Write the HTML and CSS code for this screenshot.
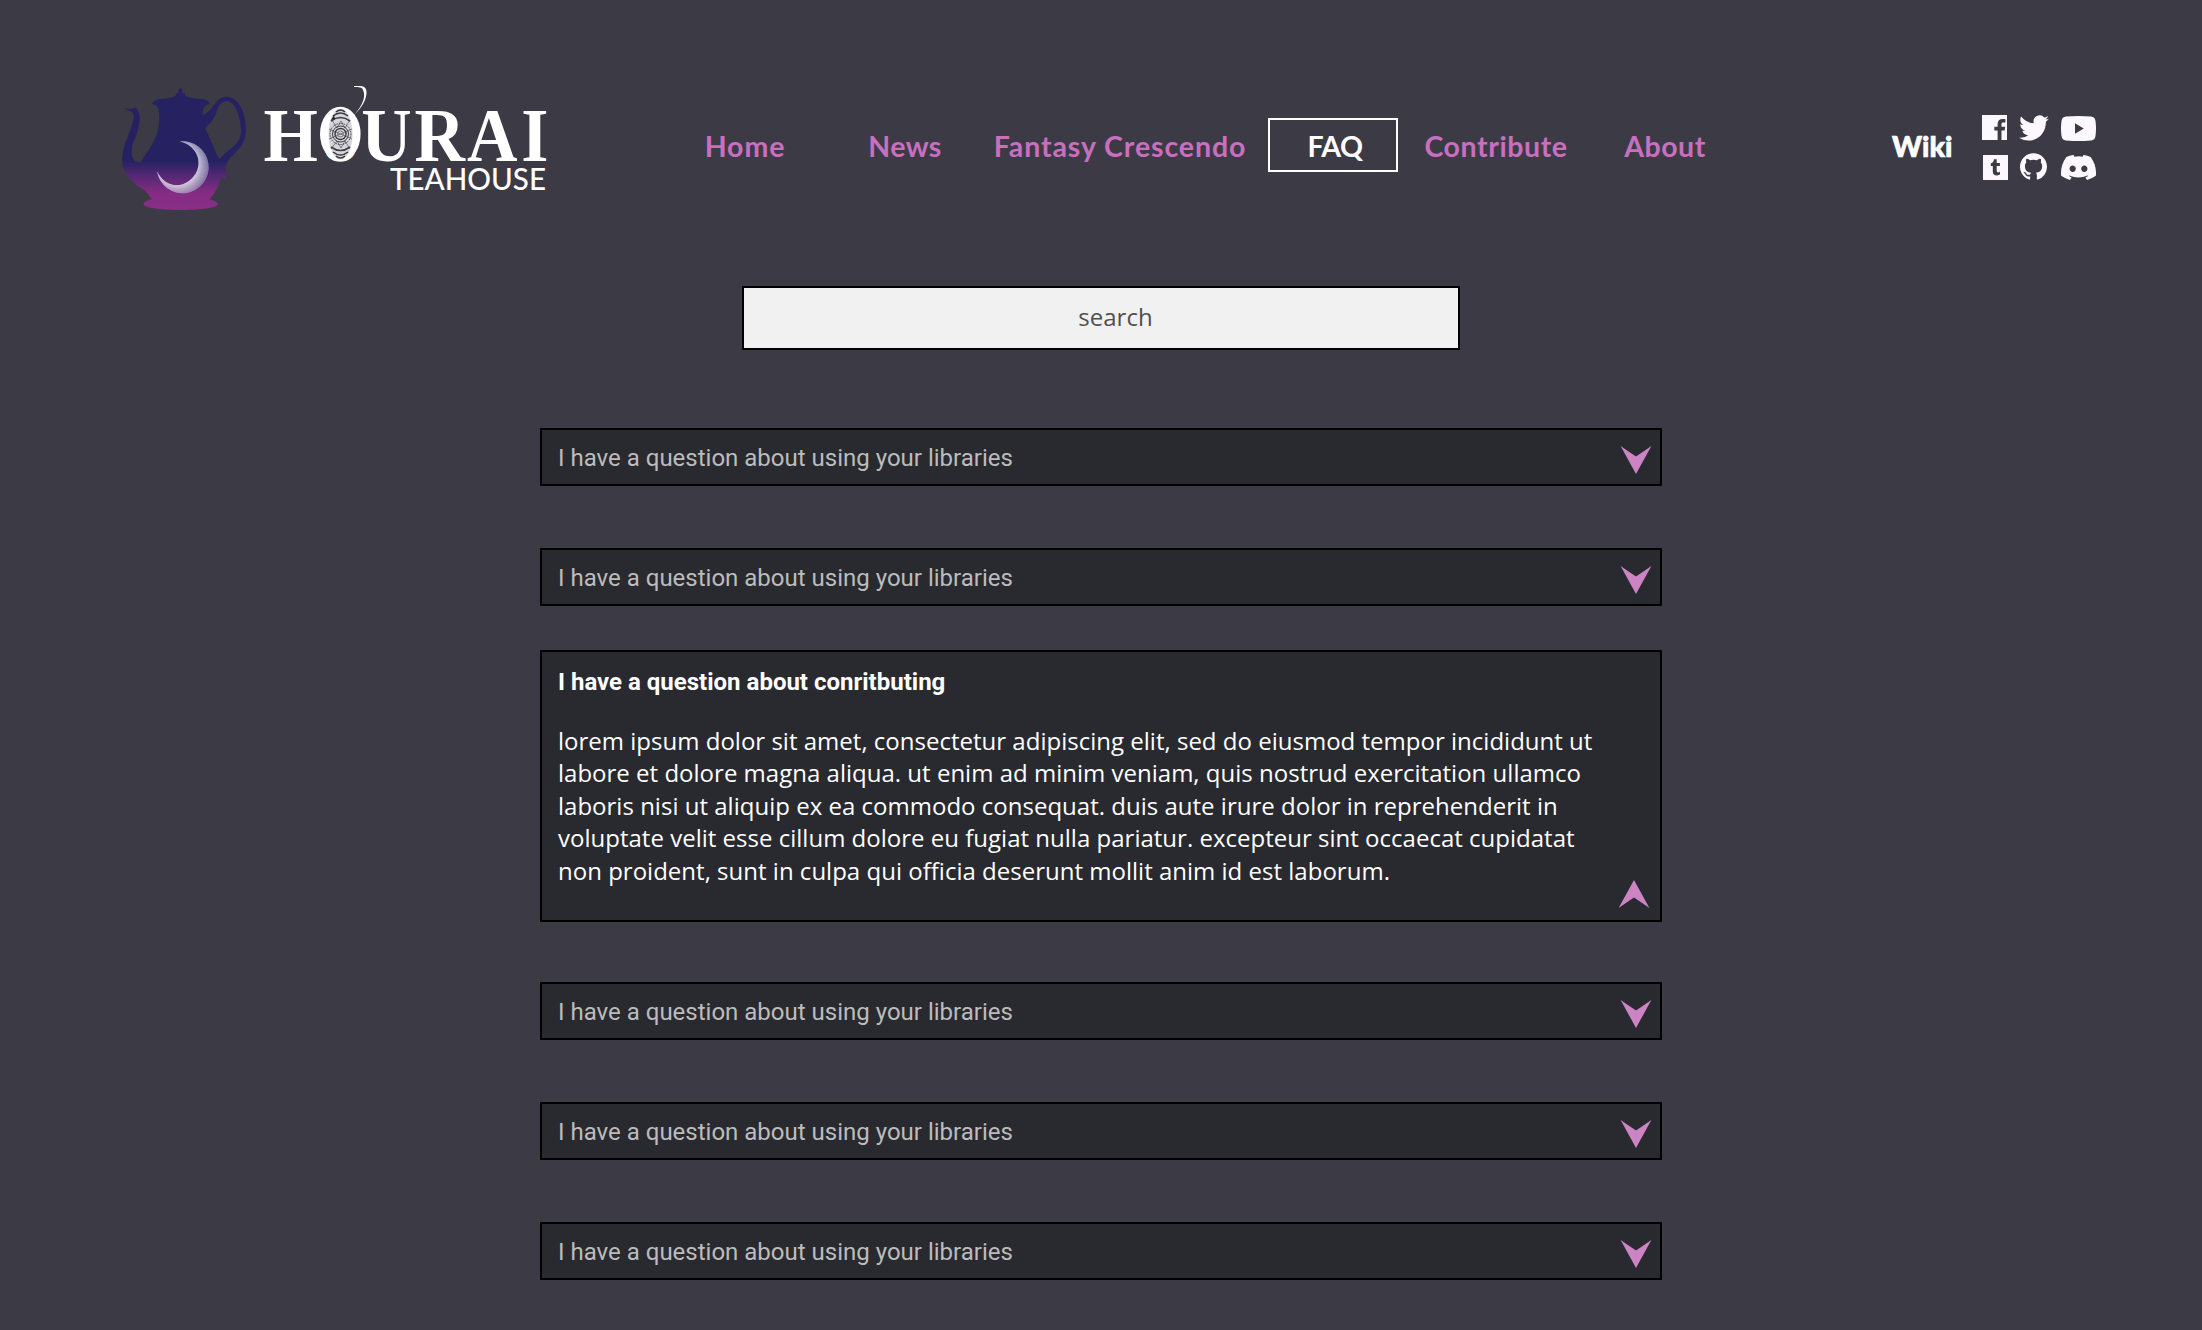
FILE: index.html
```html
<!DOCTYPE html>
<html lang="en">
<head>
<meta charset="utf-8">
<title>Hourai Teahouse - FAQ</title>
<link rel="stylesheet" href="styles.css">
</head>
<body>
<svg class="defs" width="0" height="0" aria-hidden="true">
  <symbol id="chevron" viewBox="0 0 32 28"><path d="M.6 0L16 10.500 31.400 0 16 28z"/></symbol>
</svg>
<header class="header">
  <a class="brand">
    <svg class="teapot" viewBox="0 0 450 450">
      <defs>
        <linearGradient id="night" gradientUnits="userSpaceOnUse" x1="0" y1="55" x2="0" y2="420">
          <stop offset="0" stop-color="#262262"/><stop offset=".6" stop-color="#262262"/>
          <stop offset=".72" stop-color="#552874"/><stop offset=".86" stop-color="#852c84"/><stop offset="1" stop-color="#892e86"/>
        </linearGradient>
        <linearGradient id="moonlight" gradientUnits="userSpaceOnUse" x1="190" y1="355" x2="255" y2="220">
          <stop offset="0" stop-color="#c8a9cf"/><stop offset="1" stop-color="#7f80ad"/>
        </linearGradient>
        <radialGradient id="shade" gradientUnits="userSpaceOnUse" cx="205" cy="282" r="95">
          <stop offset=".6" stop-color="#fff" stop-opacity=".55"/><stop offset="1" stop-color="#53407e" stop-opacity=".45"/>
        </radialGradient>
      </defs>
      <path fill="url(#night)" fill-rule="evenodd" d="M211 55C216 55 219 60 217 66L220 69 226 71 224 75C234 83 250 86 268 86C284 85 295 91 300 102C288 103 283 110 280 120C278 126 277 131 279 135C292 131 302 118 313 103C325 85 338 80 352 80C388 82 408 130 408 180C407 208 398 225 383 241C370 256 356 268 350 281C345 295 346 312 347 328C339 325 335 321 332 318C328 345 317 368 298 388C313 391 323 396 323 403C323 413 275 420 212 420C150 420 101 413 101 403C101 396 111 391 127 388C119 379 112 370 105 361C83 350 62 332 48 310C39 295 35 280 36 264C38 233 53 202 64 170C71 148 74 135 68 128C63 122 55 123 51 120C47 118 46 117 45 114C52 117 60 117 66 116C71 115 74 114 77 111C81 116 84 122 87 130C91 142 90 152 88 162C84 190 67 217 65 244C64 262 74 280 93 277C107 248 132 222 141 190C149 163 150 130 143 112C140 106 135 104 126 101C132 90 144 86 158 86C172 86 189 83 199 75L197 71 203 69 206 66C203 60 206 55 211 55ZM286 175C300 160 310 150 318 132C325 110 333 95 350 93C375 95 390 135 393 180C393 198 388 210 380 219C365 235 345 250 327 267Z"/>
      <path d="M209 214A78 78 0 1 1 141 304C162 348 205 356 237 333 283 301 274 230 209 214z" fill="url(#moonlight)"/>
      <path d="M209 214A78 78 0 1 1 141 304C162 348 205 356 237 333 283 301 274 230 209 214z" fill="url(#shade)"/>
    </svg>
    <svg class="wordmark" viewBox="0 0 300 140">
      <g fill="#fff">
        <text class="hourai" transform="scale(.92 1)" y="91"><tspan x="9.200">H</tspan><tspan x="73" class="small-o">O</tspan><tspan x="115.500 173.500 230.500 289.500">URAI</tspan></text>
        <text class="teahouse" x="135" y="120" textLength="156" lengthAdjust="spacingAndGlyphs">TEAHOUSE</text>
        <ellipse cx="85.300" cy="64" rx="20.300" ry="27.200"/>
        <path d="M99 16h6c7 0 8 6 5 14-3 7-7 11-11 15 9-10 12-19 9-25-1-3-4-3-9-3z"/>
      </g>
      <ellipse cx="85.500" cy="64" rx="12" ry="25.500" fill="#d6d6da"/>
      <g fill="none" stroke="#3d3b45" stroke-width="1">
        <path d="M81 42q4.500-4 9 0M78 46q7.500-6 15 0M76 51q9.500-7 19 0M81 86q4.500 4 9 0M78 82q7.500 6 15 0M76 77q9.500 7 19 0" stroke-width="1.600"/>
        <path d="M77 50l5 8 4-7 4 7 5-8M76 79l6-8 4 7 4-7 5 8M74 59l23 10M74 69l23-10" stroke-width=".6"/>
        <circle cx="85.500" cy="64" r="10.500" stroke-dasharray="1.500 1"/>
        <circle cx="85.500" cy="64" r="8"/>
        <circle cx="85.500" cy="64" r="5.500" stroke-width="1.400"/>
        <circle cx="85.500" cy="64" r="3" stroke="#77757d"/>
      </g>
      <path d="M79 45l-3 5 4-1z" fill="#24232a"/>
    </svg>
  </a>
  <nav class="nav">
    <a class="link home">Home</a>
    <a class="link news">News</a>
    <a class="link fantasy">Fantasy Crescendo</a>
    <a class="link faq">FAQ</a>
    <a class="link contribute">Contribute</a>
    <a class="link about">About</a>
  </nav>
  <a class="wiki">Wiki</a>
  <div class="social">
    <svg class="fb" viewBox="0 0 25 25"><path d="M0 0h25v25h-5.500v-9.500h3.200l.5-3.800h-3.700V9.400c0-1.200.5-1.800 1.900-1.800h2V4.200c-.7-.1-1.700-.2-2.800-.2-3 0-5 1.800-5 5v2.700h-3.300v3.800h3.300V25H0z"/></svg>
    <svg class="tw" viewBox="0 2 24 20" preserveAspectRatio="none"><path d="M24 4.600a10 10 0 0 1-2.800.8 5 5 0 0 0 2.100-2.700c-1 .6-2 1-3.100 1.200a4.900 4.900 0 0 0-8.400 4.500A14 14 0 0 1 1.700 3.200a4.900 4.900 0 0 0 1.500 6.500 4.900 4.900 0 0 1-2.200-.6c0 2.300 1.600 4.400 3.900 4.900a5 5 0 0 1-2.200.1 4.900 4.900 0 0 0 4.600 3.400A9.900 9.900 0 0 1 0 19.500a14 14 0 0 0 7.500 2.200c9.100 0 14-7.500 14-14v-.6A10 10 0 0 0 24 4.600z"/></svg>
    <svg class="yt" viewBox="0 0 35 25"><path d="M5 .5Q17.500-.5 30 .5q4 .3 4.500 4.500 1 7.500 0 15-.5 4.200-4.500 4.500-12.500 1-25 0Q1 24.200.5 20q-1-7.500 0-15Q1 .8 5 .5zM14 7.200v10.600l8.800-5.300z" fill-rule="evenodd"/></svg>
    <svg class="tb" viewBox="0 0 25 25"><path d="M0 0h25v25H0zM11 4.300c-.2 2.300-1.300 3.500-3.200 4.100v2.700h2v5.300c0 2.600 1.500 4 4.200 4 1.200 0 2.200-.3 3-.8v-2.900c-.6.4-1.200.5-1.800.5-.9 0-1.500-.4-1.500-1.500v-4.600h3.200V8h-3.200V4.300z" fill-rule="evenodd"/></svg>
    <svg class="gh" viewBox="0 0 16 15.700"><path d="M8 0C3.580 0 0 3.580 0 8c0 3.540 2.290 6.530 5.470 7.590.4.070.55-.17.55-.38 0-.19-.01-.82-.01-1.490-2.010.37-2.530-.49-2.690-.94-.09-.23-.48-.94-.82-1.130-.28-.15-.68-.52-.01-.53.63-.01 1.080.58 1.230.82.72 1.210 1.870.87 2.330.66.070-.52.280-.87.510-1.070-1.780-.2-3.640-.89-3.640-3.950 0-.87.310-1.590.820-2.150-.08-.2-.36-1.020.08-2.120 0 0 .67-.21 2.200.82a7.600 7.600 0 0 1 4 0c1.530-1.040 2.200-.82 2.200-.82.44 1.100.16 1.920.08 2.120.51.56.82 1.270.82 2.150 0 3.070-1.870 3.750-3.650 3.950.29.25.54.73.54 1.480 0 1.070-.01 1.930-.01 2.200 0 .21.15.46.55.38A8.010 8.010 0 0 0 16 8c0-4.420-3.580-8-8-8z"/></svg>
    <svg class="dc" viewBox="0 2.900 24 18.200" preserveAspectRatio="none"><path d="M20.317 4.370a19.800 19.800 0 0 0-4.885-1.515c-.211.375-.457.880-.608 1.250a18.300 18.300 0 0 0-5.648 0 12.600 12.600 0 0 0-.617-1.250A19.700 19.700 0 0 0 3.677 4.370C.533 9.046-.32 13.580.1 18.058a20 20 0 0 0 5.993 3.030c.462-.63.874-1.295 1.226-1.994a13 13 0 0 1-1.872-.892l.372-.292c3.928 1.793 8.180 1.793 12.362 0l.373.292c-.6.350-1.220.645-1.873.892.360.698.772 1.362 1.225 1.993a19.900 19.900 0 0 0 6.002-3.030c.5-5.177-.838-9.674-3.591-13.687zM8.020 15.330c-1.183 0-2.157-1.085-2.157-2.419s.955-2.419 2.157-2.419c1.210 0 2.176 1.095 2.157 2.420 0 1.333-.956 2.418-2.157 2.418zm7.975 0c-1.183 0-2.157-1.085-2.157-2.419s.955-2.419 2.157-2.419c1.210 0 2.176 1.095 2.157 2.420 0 1.333-.946 2.418-2.157 2.418z"/></svg>
  </div>
</header>
<main class="main">
  <input class="search" type="text" placeholder="search" aria-label="search">
  <section class="faq-list">
    <div class="row">I have a question about using your libraries<svg class="chevron"><use href="#chevron"/></svg></div>
    <div class="row">I have a question about using your libraries<svg class="chevron"><use href="#chevron"/></svg></div>
    <article class="row open">
      <h2 class="question">I have a question about conritbuting</h2>
      <p class="answer">lorem ipsum dolor sit amet, consectetur adipiscing elit, sed do eiusmod tempor incididunt ut<br>labore et dolore magna aliqua. ut enim ad minim veniam, quis nostrud exercitation ullamco<br>laboris nisi ut aliquip ex ea commodo consequat. duis aute irure dolor in reprehenderit in<br>voluptate velit esse cillum dolore eu fugiat nulla pariatur. excepteur sint occaecat cupidatat<br>non proident, sunt in culpa qui officia deserunt mollit anim id est laborum.</p>
      <svg class="chevron up"><use href="#chevron"/></svg>
    </article>
    <div class="row">I have a question about using your libraries<svg class="chevron"><use href="#chevron"/></svg></div>
    <div class="row">I have a question about using your libraries<svg class="chevron"><use href="#chevron"/></svg></div>
    <div class="row">I have a question about using your libraries<svg class="chevron"><use href="#chevron"/></svg></div>
  </section>
</main>
</body>
</html>
```
FILE: styles.css
```css
* { box-sizing: border-box; }
body {
  margin: 0;
  height: 1330px;
  overflow: hidden;
  background: #3c3b45;
  font-family: Roboto, sans-serif;
  font-size: 24px;
}
.defs { display: block; }
.header {
  display: flex;
  align-items: flex-start;
  height: 286px;
  padding: 70px 0 0 110px;
}
.brand { display: flex; width: 540px; }
.teapot { width: 150px; height: 150px; margin-right: -5px; }
.wordmark { width: 300px; height: 140px; }
.hourai { font: bold 76px "Liberation Serif", serif; }
.small-o { font-size: 50px; }
.teahouse { font: 500 31px Lato, sans-serif; }
.nav, .wiki { font-family: Lato, sans-serif; font-weight: 700; font-size: 28.5px; line-height: 52px; white-space: nowrap; }
.nav { display: flex; width: 1242px; padding-top: 48px; margin-left: 30px; }
.link {
  display: flex;
  justify-content: center;
  height: 54px;
  border: 2px solid transparent;
  color: #c86fc0;
}
.home { width: 130px; letter-spacing: .9px; }
.news { width: 130px; margin-left: 30px; letter-spacing: .4px; }
.fantasy { width: 270px; margin-left: 15px; letter-spacing: .9px; }
.faq { width: 130px; margin-left: 13px; border-color: #fff; color: #fff; padding-left: 4px; letter-spacing: -.5px; }
.contribute { width: 160px; margin-left: 18px; letter-spacing: .6px; }
.about { width: 130px; margin-left: 24px; letter-spacing: .5px; }
.wiki { width: 90px; margin-left: -30px; padding-top: 50px; font-weight: 900; color: #fff; -webkit-text-stroke: .7px #fff; }
.social {
  display: grid;
  grid-template-columns: 36px 43px 35px;
  grid-template-rows: 38px 27px;
  padding-top: 45px;
  fill: #fdf8ff;
}
.fb, .tb { width: 25px; height: 25px; }
.tw { width: 30px; height: 26px; margin-left: 1px; }
.yt { width: 35px; height: 25px; margin-top: 1px; }
.tb { margin: 2px 0 0 1px; }
.gh { width: 27px; height: 27px; margin-left: 2px; }
.dc { width: 35px; height: 25px; margin-top: 2px; }
.main { display: flex; flex-direction: column; align-items: center; }
.search {
  width: 718px;
  height: 64px;
  padding: 0 0 3px 29px;
  border: 2px solid #000;
  border-radius: 0;
  background: #f1f1f1;
  font: 24px "Open Sans", sans-serif;
  text-align: center;
}
.search::placeholder { color: #505050; opacity: 1; }
.faq-list { width: 1122px; margin-top: 78px; }
.row {
  display: flex;
  justify-content: space-between;
  height: 58px;
  margin-bottom: 62px;
  padding: 0 8px 0 16px;
  border: 2px solid #000;
  background: #292a2f;
  color: #bcbcbc;
  line-height: 57px;
}
.chevron { width: 32px; height: 28px; margin-top: 16px; fill: #cd84c5; }
.open {
  position: relative;
  display: block;
  height: 272px;
  margin: -18px 0 60px;
  padding-top: 14px;
  color: #fff;
}
.question { margin: 0; font-size: 24px; font-weight: 700; line-height: 32px; }
.answer { margin: 26.7px 0 0; font-family: "Open Sans", sans-serif; font-size: 24px; line-height: 32.5px; letter-spacing: .01px; white-space: nowrap; }
.up { position: absolute; right: 10px; bottom: 12px; transform: rotate(180deg); }
```
